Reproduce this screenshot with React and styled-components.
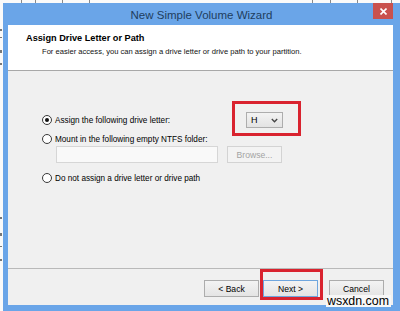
import React from 'react';
import styled, { createGlobalStyle } from 'styled-components';

const Global = createGlobalStyle`
  html, body { margin: 0; padding: 0; background: #fafafa; }
  body { font-family: "Liberation Sans", Arial, sans-serif; color: #000; }
`;

const Screen = styled.div`
  position: relative;
  width: 400px;
  height: 311px;
  overflow: hidden;
  display: flex;
  flex-direction: column;
  background: #fafafa;
`;

const TopStrip = styled.div`
  height: 3px;
  flex: none;
  display: flex;
`;

const StripCell = styled.div`
  width: ${p => p.$w}px;
  flex: none;
  border-right: 1px solid #8a8a8a;
`;

const Main = styled.div`
  flex: 1;
  display: flex;
  min-height: 0;
`;

const LeftStrip = styled.div`
  width: 3px;
  flex: none;
  display: flex;
  flex-direction: column;
`;

const Mark = styled.div`
  margin-top: ${p => p.$t}px;
  height: ${p => p.$h}px;
  width: 2px;
  background: #777;
`;

const Window = styled.div`
  flex: 1;
  display: flex;
  flex-direction: column;
  background: #6aa5e8;
`;

const TitleBar = styled.div`
  height: 22px;
  flex: none;
  display: grid;
  grid-template-columns: 1fr auto 1fr;
  align-items: center;
`;

const Title = styled.div`
  grid-column: 2;
  font-size: 11.5px;
  line-height: 14px;
  color: #1e3d5e;
  padding-top: 1px;
`;

const Close = styled.div`
  grid-column: 3;
  justify-self: end;
  align-self: start;
  margin-right: 7px;
  width: 20px;
  height: 16px;
  background: #c9514d;
  display: flex;
  align-items: center;
  justify-content: center;
`;

const Frame = styled.div`
  flex: 1;
  display: flex;
  padding: 0 7px 6px 5px;
  min-height: 0;
`;

const Client = styled.div`
  flex: 1;
  display: flex;
  flex-direction: column;
  background: #f0f0f0;
`;

const Header = styled.div`
  height: 46px;
  flex: none;
  box-sizing: border-box;
  background: #fff;
  border-bottom: 1px solid #a8a8a8;
  padding: 7px 0 0 18px;
`;

const HeaderTitle = styled.div`
  font-weight: bold;
  font-size: 9.2px;
  line-height: 12px;
`;

const HeaderSub = styled.div`
  font-size: 7.6px;
  line-height: 11px;
  margin: 2px 0 0 16px;
  color: #111;
`;

const Body = styled.div`
  flex: 1;
  display: flex;
  flex-direction: column;
  padding: 41px 0 0 34px;
`;

const OptionRow = styled.div`
  display: flex;
  align-items: center;
  height: ${p => p.$h || 14}px;
  margin-top: ${p => p.$mt || 0}px;
`;

const Radio = styled.span`
  width: 10px;
  height: 10px;
  box-sizing: border-box;
  border-radius: 50%;
  border: 1px solid #3a3a3a;
  background: #fff;
  flex: none;
  display: flex;
  align-items: center;
  justify-content: center;
  &::after {
    content: '';
    width: 4px;
    height: 4px;
    border-radius: 50%;
    background: ${p => (p.$checked ? '#111' : 'transparent')};
  }
`;

const Label = styled.span`
  font-size: 8.2px;
  line-height: 11px;
  margin-left: 3px;
  width: ${p => (p.$w ? `${p.$w}px` : 'auto')};
  flex: none;
  white-space: nowrap;
`;

const Highlight = styled.div`
  position: relative;
`;

const RedFrame = styled.div`
  position: absolute;
  left: ${p => -p.$l}px;
  right: ${p => -p.$r}px;
  top: ${p => -p.$t}px;
  bottom: ${p => -p.$b}px;
  border: 3px solid #d9232f;
  pointer-events: none;
`;

const Select = styled.div`
  width: 37px;
  height: 16px;
  box-sizing: border-box;
  border: 1px solid #adadad;
  background: linear-gradient(#f3f3f3, #e3e3e3);
  display: flex;
  align-items: center;
  justify-content: space-between;
  padding: 0 4px 0 4px;
  font-size: 9px;
`;

const FieldRow = styled.div`
  display: flex;
  gap: 9px;
  margin: 0 0 0 14px;
  height: 17px;
`;

const TextField = styled.div`
  width: 162px;
  box-sizing: border-box;
  border: 1px solid #d6d6d6;
  background: #f9f9f9;
`;

const Button = styled.div`
  width: 55px;
  height: 17px;
  box-sizing: border-box;
  border: 1px solid ${p => (p.$disabled ? '#d3d3d3' : p.$default ? '#6fa6de' : '#acacac')};
  background: ${p => (p.$disabled ? '#f3f3f3' : 'linear-gradient(#f3f3f3, #e4e4e4)')};
  color: ${p => (p.$disabled ? '#a3a3a3' : '#000')};
  font-size: 8.6px;
  display: flex;
  align-items: center;
  justify-content: center;
`;

const Footer = styled.div`
  height: 37px;
  flex: none;
  box-sizing: border-box;
  border-top: 1px solid #b9b9b9;
  display: flex;
  justify-content: flex-end;
  align-items: flex-start;
  padding: 11px 9px 0 0;
`;

const NextGap = styled.div`
  width: ${p => p.$w}px;
  flex: none;
`;

const Watermark = styled.div`
  position: absolute;
  left: 326px;
  top: 295px;
  font-size: 12.4px;
  line-height: 12px;
  color: #000;
  background: #f7f7f7;
  padding: 0 2px 0 1px;
`;

const stripCells = [21, 13, 26, 26, 222, 17, 26, 33];
const marks = [
  [26, 2], [6, 1], [12, 3], [10, 2], [152, 2], [14, 3], [10, 1], [12, 2],
];

export default function App() {
  return (
    <>
      <Global />
      <Screen>
        <TopStrip>
          {stripCells.map((w, i) => (
            <StripCell key={i} $w={w} />
          ))}
        </TopStrip>
        <Main>
          <LeftStrip>
            {marks.map(([t, h], i) => (
              <Mark key={i} $t={t} $h={h} />
            ))}
          </LeftStrip>
          <Window>
            <TitleBar>
              <Title>New Simple Volume Wizard</Title>
              <Close>
                <svg width="7" height="7" viewBox="0 0 7 7">
                  <path d="M0.5 0.5 L6.5 6.5 M6.5 0.5 L0.5 6.5" stroke="#fff" strokeWidth="1.6" />
                </svg>
              </Close>
            </TitleBar>
            <Frame>
              <Client>
                <Header>
                  <HeaderTitle>Assign Drive Letter or Path</HeaderTitle>
                  <HeaderSub>
                    For easier access, you can assign a drive letter or drive path to your partition.
                  </HeaderSub>
                </Header>
                <Body>
                  <OptionRow $h={16}>
                    <Radio $checked />
                    <Label $w={191}>Assign the following drive letter:</Label>
                    <Highlight>
                      <Select>
                        <span>H</span>
                        <svg width="7" height="5" viewBox="0 0 7 5">
                          <path d="M0.8 1 L3.5 3.8 L6.2 1" fill="none" stroke="#444" strokeWidth="1.3" />
                        </svg>
                      </Select>
                      <RedFrame $l={14} $r={18} $t={11} $b={8} />
                    </Highlight>
                  </OptionRow>
                  <OptionRow $mt={4}>
                    <Radio />
                    <Label>Mount in the following empty NTFS folder:</Label>
                  </OptionRow>
                  <FieldRow>
                    <TextField />
                    <Button $disabled>Browse...</Button>
                  </FieldRow>
                  <OptionRow $mt={8}>
                    <Radio />
                    <Label>Do not assign a drive letter or drive path</Label>
                  </OptionRow>
                </Body>
                <Footer>
                  <Button>&lt; Back</Button>
                  <NextGap $w={4} />
                  <Highlight>
                    <Button $default>Next &gt;</Button>
                    <RedFrame $l={3} $r={5} $t={11} $b={3} />
                  </Highlight>
                  <NextGap $w={11} />
                  <Button>Cancel</Button>
                </Footer>
              </Client>
            </Frame>
          </Window>
        </Main>
        <Watermark>wsxdn.com</Watermark>
      </Screen>
    </>
  );
}
